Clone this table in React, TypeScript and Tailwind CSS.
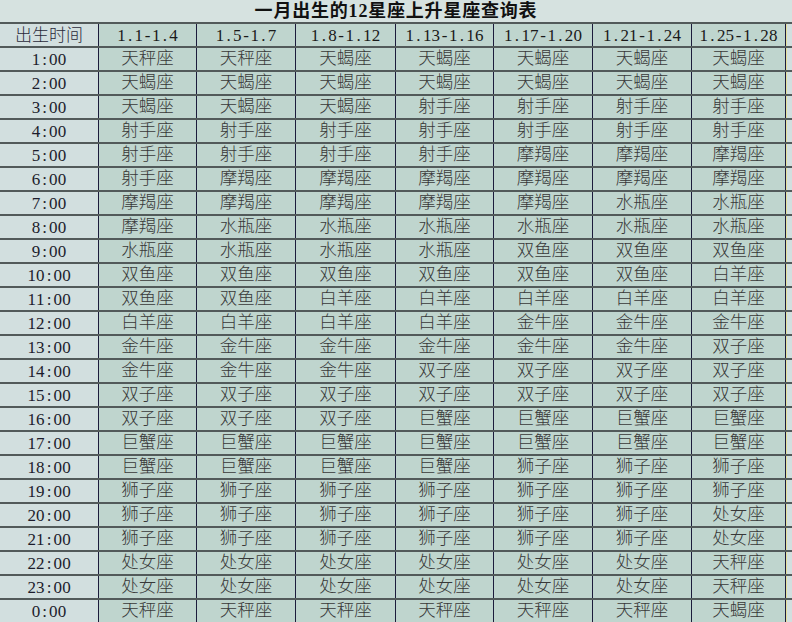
const cols = ['1.1-1.4', '1.5-1.7', '1.8-1.12', '1.13-1.16', '1.17-1.20', '1.21-1.24', '1.25-1.28']

const rows: [string, string[]][] = [
  ['1:00', ['天秤座', '天秤座', '天蝎座', '天蝎座', '天蝎座', '天蝎座', '天蝎座']],
  ['2:00', ['天蝎座', '天蝎座', '天蝎座', '天蝎座', '天蝎座', '天蝎座', '天蝎座']],
  ['3:00', ['天蝎座', '天蝎座', '天蝎座', '射手座', '射手座', '射手座', '射手座']],
  ['4:00', ['射手座', '射手座', '射手座', '射手座', '射手座', '射手座', '射手座']],
  ['5:00', ['射手座', '射手座', '射手座', '射手座', '摩羯座', '摩羯座', '摩羯座']],
  ['6:00', ['射手座', '摩羯座', '摩羯座', '摩羯座', '摩羯座', '摩羯座', '摩羯座']],
  ['7:00', ['摩羯座', '摩羯座', '摩羯座', '摩羯座', '摩羯座', '水瓶座', '水瓶座']],
  ['8:00', ['摩羯座', '水瓶座', '水瓶座', '水瓶座', '水瓶座', '水瓶座', '水瓶座']],
  ['9:00', ['水瓶座', '水瓶座', '水瓶座', '水瓶座', '双鱼座', '双鱼座', '双鱼座']],
  ['10:00', ['双鱼座', '双鱼座', '双鱼座', '双鱼座', '双鱼座', '双鱼座', '白羊座']],
  ['11:00', ['双鱼座', '双鱼座', '白羊座', '白羊座', '白羊座', '白羊座', '白羊座']],
  ['12:00', ['白羊座', '白羊座', '白羊座', '白羊座', '金牛座', '金牛座', '金牛座']],
  ['13:00', ['金牛座', '金牛座', '金牛座', '金牛座', '金牛座', '金牛座', '双子座']],
  ['14:00', ['金牛座', '金牛座', '金牛座', '双子座', '双子座', '双子座', '双子座']],
  ['15:00', ['双子座', '双子座', '双子座', '双子座', '双子座', '双子座', '双子座']],
  ['16:00', ['双子座', '双子座', '双子座', '巨蟹座', '巨蟹座', '巨蟹座', '巨蟹座']],
  ['17:00', ['巨蟹座', '巨蟹座', '巨蟹座', '巨蟹座', '巨蟹座', '巨蟹座', '巨蟹座']],
  ['18:00', ['巨蟹座', '巨蟹座', '巨蟹座', '巨蟹座', '狮子座', '狮子座', '狮子座']],
  ['19:00', ['狮子座', '狮子座', '狮子座', '狮子座', '狮子座', '狮子座', '狮子座']],
  ['20:00', ['狮子座', '狮子座', '狮子座', '狮子座', '狮子座', '狮子座', '处女座']],
  ['21:00', ['狮子座', '狮子座', '狮子座', '狮子座', '狮子座', '狮子座', '处女座']],
  ['22:00', ['处女座', '处女座', '处女座', '处女座', '处女座', '处女座', '天秤座']],
  ['23:00', ['处女座', '处女座', '处女座', '处女座', '处女座', '处女座', '天秤座']],
  ['0:00', ['天秤座', '天秤座', '天秤座', '天秤座', '天秤座', '天秤座', '天蝎座']],
]

const grid = 'grid grid-cols-[99px_98px_99px_100px_98px_99px_99px_94px_6px]'
const cjk = "font-['Liberation_Serif','Noto_Sans_CJK_SC',serif]"

// SimSun-like half-width digits: every char gets the same box
function Mono({ text }: { text: string }) {
  return (
    <span className="flex">
      {text.split('').map((c, i) => (
        <span key={i} className="inline-block w-[8.7px] text-center">
          {c}
        </span>
      ))}
    </span>
  )
}

export default function App() {
  return (
    <div className={`h-[622px] w-[792px] overflow-hidden bg-[#d2dfdf] ${cjk}`}>
      <div className="flex h-[24px] items-center justify-center border-b-2 border-[#525a5a] bg-[#d6e2e0] text-[18px] font-bold tracking-[0.8px] text-[#111]">
        一月出生的12星座上升星座查询表
      </div>

      <div className={`${grid} h-[24px] border-b-2 border-[#525a5a] text-[17px] leading-none`}>
        <div className="flex items-center justify-center border-r border-[#1c1c3c] bg-[#d2dfdf] font-light text-[#2a2a3a]">
          出生时间
        </div>
        {cols.map((c) => (
          <div
            key={c}
            className="flex items-center justify-center border-r border-[#1c1c3c] bg-[#bfd5ce] text-[17px] text-[#1a1a1a]"
          >
            <Mono text={c} />
          </div>
        ))}
        <div className="border-l border-[#e4df9a] bg-[#d2dfdf]" />
      </div>

      {rows.map(([time, signs]) => (
        <div key={time} className={`${grid} h-[24px] border-b-2 border-[#525a5a] leading-none`}>
          <div className="flex items-center justify-center border-r border-[#1c1c3c] bg-[#d2dfdf] text-[17px] text-[#1c1c2c]">
            <Mono text={time} />
          </div>
          {signs.map((s, i) => (
            <div
              key={i}
              className="flex items-center justify-center border-r border-[#1c1c3c] bg-[#bfd5ce] text-[17.5px] font-light text-[#383838]"
            >
              {s}
            </div>
          ))}
          <div className="border-l border-[#e4df9a] bg-[#d2dfdf]" />
        </div>
      ))}
    </div>
  )
}
